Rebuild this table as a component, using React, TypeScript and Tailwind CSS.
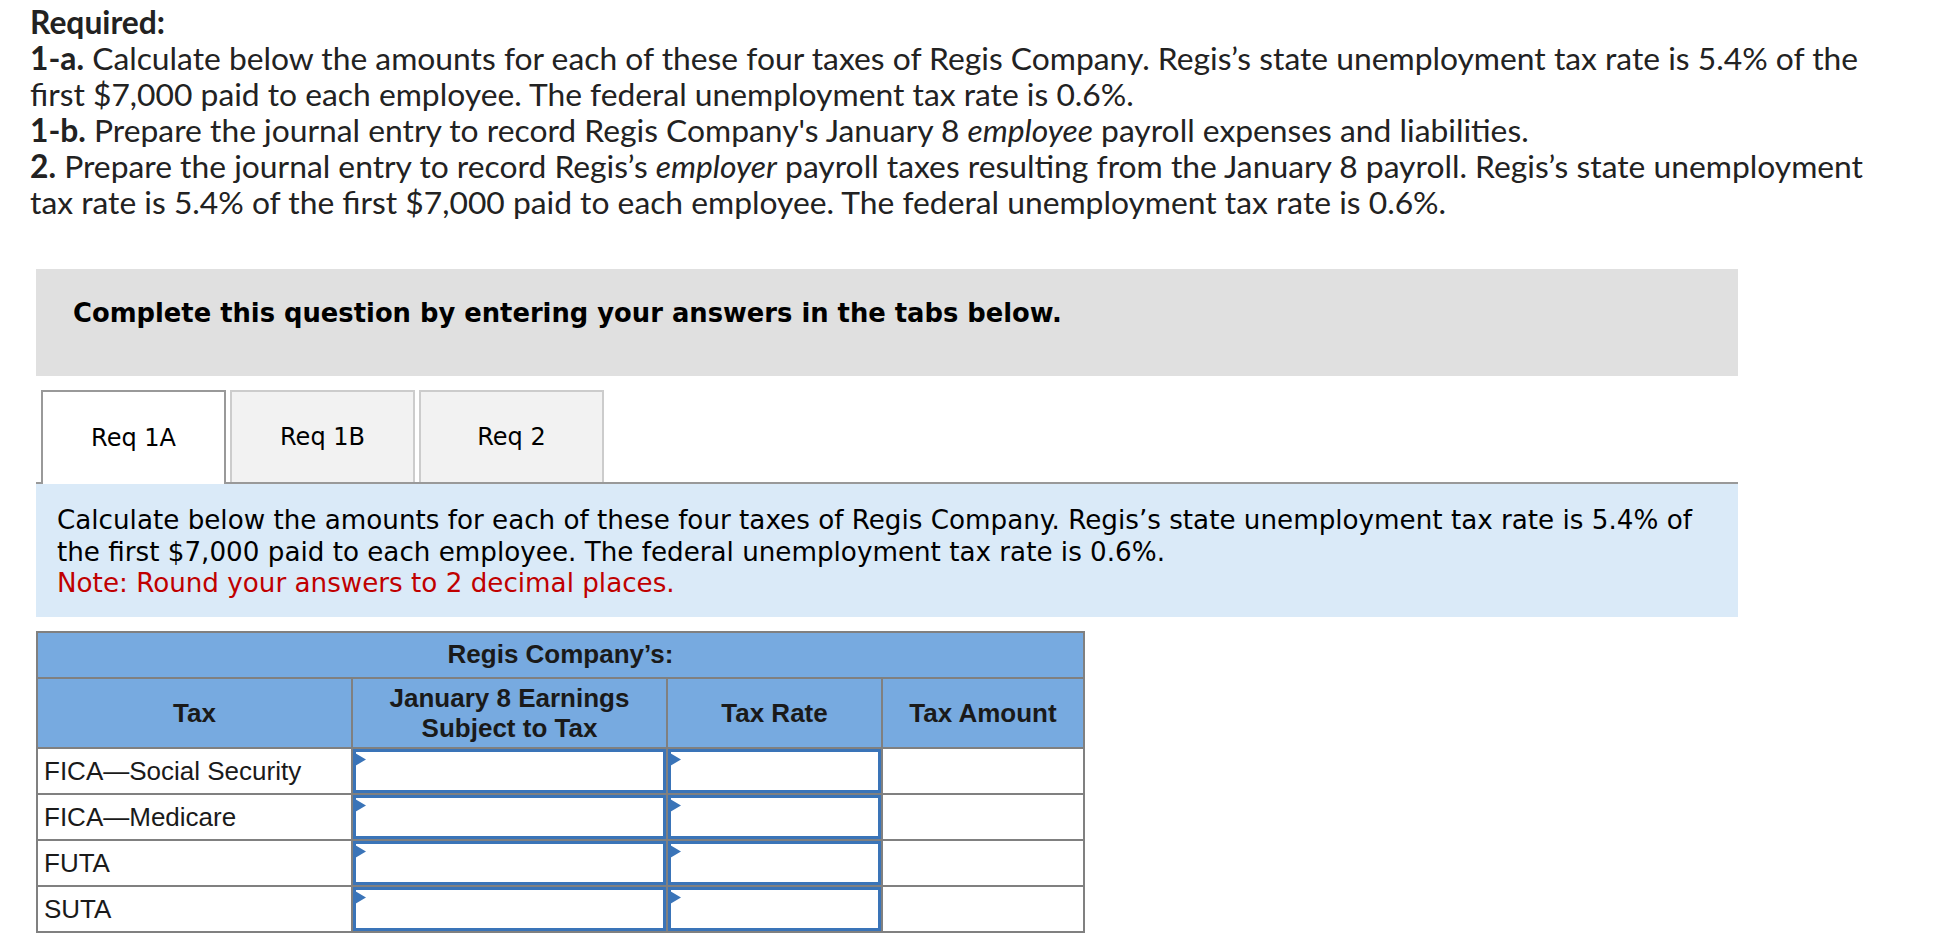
import React from 'react';

const rows = ['FICA—Social Security', 'FICA—Medicare', 'FUTA', 'SUTA'];

function InputCell() {
    return (
        <td className="p-0 border-2 border-[#808080]">
            <div className="relative h-[44px] border-[3px] border-[#3a74b8] bg-white">
                <svg className="absolute left-[-1px] top-[1px]" width="11" height="13" viewBox="0 0 11 13">
                    <path d="M0 0 L11 6.5 L0 13 Z" fill="#3a74b8" />
                </svg>
            </div>
        </td>
    );
}

export default function App() {
    return (
        <div className="min-h-[940px] bg-white">
            <div className="pl-[30px] pt-[4px] text-[31.8px] leading-[36px] text-[#222] font-['Lato','Liberation_Sans',sans-serif] whitespace-nowrap">
                <div className="font-bold">Required:</div>
                <div>
                    <span className="font-bold">1-a.</span> Calculate below the amounts for each of these four taxes of Regis Company. Regis’s state unemployment tax rate is 5.4% of the
                </div>
                <div>first $7,000 paid to each employee. The federal unemployment tax rate is 0.6%.</div>
                <div>
                    <span className="font-bold">1-b.</span> Prepare the journal entry to record Regis Company's January 8 <em>employee</em> payroll expenses and liabilities.
                </div>
                <div>
                    <span className="font-bold">2.</span> Prepare the journal entry to record Regis’s <em>employer</em> payroll taxes resulting from the January 8 payroll. Regis’s state unemployment
                </div>
                <div>tax rate is 5.4% of the first $7,000 paid to each employee. The federal unemployment tax rate is 0.6%.</div>
            </div>

            <div className="ml-[36px] w-[1702px] mt-[49px] font-['DejaVu_Sans',Verdana,sans-serif] text-black">
                <div className="h-[107px] bg-[#e0e0e0] pl-[37px] pt-[29px] text-[25.8px] font-bold leading-[30px] whitespace-nowrap">
                    Complete this question by entering your answers in the tabs below.
                </div>

                <div className="mt-[14px] flex items-end gap-[4px] pl-[5px] border-b-2 border-[#999]">
                    <div className="w-[185px] h-[94px] -mb-[2px] bg-white border-2 border-b-0 border-[#999] flex items-center justify-center text-[24px]">
                        Req 1A
                    </div>
                    <div className="w-[185px] h-[92px] bg-[#f2f2f2] border-2 border-b-0 border-[#ccc] flex items-center justify-center text-[24px]">
                        Req 1B
                    </div>
                    <div className="w-[185px] h-[92px] bg-[#f2f2f2] border-2 border-b-0 border-[#ccc] flex items-center justify-center text-[24px]">
                        Req 2
                    </div>
                </div>

                <div className="bg-[#daeaf8] pl-[21px] pt-[21px] pb-[17px] text-[26.2px] leading-[31.5px] whitespace-nowrap">
                    <div>Calculate below the amounts for each of these four taxes of Regis Company. Regis’s state unemployment tax rate is 5.4% of</div>
                    <div>the first $7,000 paid to each employee. The federal unemployment tax rate is 0.6%.</div>
                    <div className="text-[#c00000]">Note: Round your answers to 2 decimal places.</div>
                </div>
            </div>

            <table className="ml-[36px] mt-[14px] border-collapse border-2 border-[#808080] font-['Liberation_Sans',Arial,sans-serif] text-[#1a1a1a] table-fixed w-[1047px]">
                <colgroup>
                    <col className="w-[315px]" />
                    <col className="w-[315px]" />
                    <col className="w-[215px]" />
                    <col className="w-[202px]" />
                </colgroup>
                <thead>
                    <tr className="h-[46px] bg-[#77aae0]">
                        <th colSpan={4} className="border-2 border-[#808080] font-bold text-[26px]">Regis Company’s:</th>
                    </tr>
                    <tr className="h-[70px] bg-[#77aae0] text-[26px] leading-[30px]">
                        <th className="border-2 border-[#808080] font-bold">Tax</th>
                        <th className="border-2 border-[#808080] font-bold">January 8 Earnings<br />Subject to Tax</th>
                        <th className="border-2 border-[#808080] font-bold">Tax Rate</th>
                        <th className="border-2 border-[#808080] font-bold">Tax Amount</th>
                    </tr>
                </thead>
                <tbody>
                    {rows.map((r) => (
                        <tr key={r} className="h-[46px]">
                            <td className="border-2 border-[#808080] pl-[6px] text-[26px] leading-[30px] whitespace-nowrap">{r}</td>
                            <InputCell />
                            <InputCell />
                            <td className="border-2 border-[#808080] bg-white"></td>
                        </tr>
                    ))}
                </tbody>
            </table>
        </div>
    );
}
